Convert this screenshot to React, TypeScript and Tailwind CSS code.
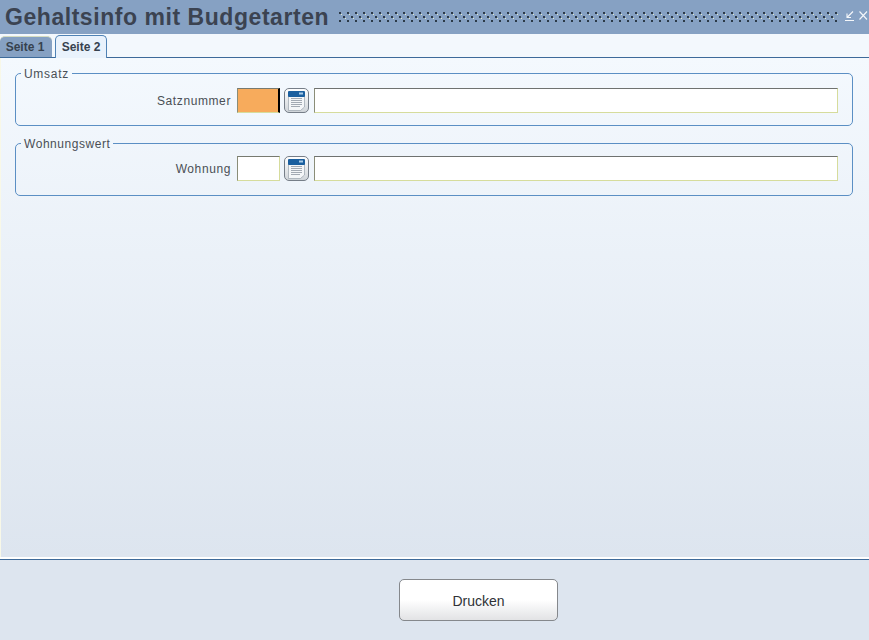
import React from "react";

function CalendarIcon() {
  return (
    <svg width="25" height="25" viewBox="0 0 25 25" className="block">
      <defs>
        <linearGradient id="calBg" x1="0" y1="0" x2="0" y2="1">
          <stop offset="0" stopColor="#ffffff" />
          <stop offset="1" stopColor="#cfd4d9" />
        </linearGradient>
      </defs>
      <rect x="0.5" y="0.5" width="24" height="24" rx="4.5" fill="url(#calBg)" stroke="#767e88" />
      <path d="M4.5 6h16v13l-4 3.5h-12z" fill="#f4f6f8" stroke="#9aa3ac" strokeWidth="0.7" />
      <rect x="4" y="3" width="17" height="6" rx="1" fill="#1a5f9f" />
      <rect x="15" y="4.5" width="4" height="2" fill="#a8cbe8" />
      <path d="M7 10.5h11M7 12.5h11M7 14.5h11M7 16.5h11M7 18.5h9" stroke="#9aa2aa" strokeWidth="0.9" />
    </svg>
  );
}

function Field({ label, width, orange }: { label: string; width: string; orange?: boolean }) {
  return (
    <div className="flex items-center h-[25px]">
      <div className={`${width} text-right text-[12px] text-[#4a4f55] tracking-[0.6px] pr-[6px] shrink-0`}>{label}</div>
      <div
        className={`w-[43px] h-[25px] shrink-0 border border-[#d6dc9c] border-t-[#777a70] border-l-[#8a8d78] ${
          orange ? "bg-[#f7ab5c] border-r-[2px] border-r-black" : "bg-white"
        }`}
      />
      <div className="ml-[4px] shrink-0">
        <CalendarIcon />
      </div>
      <div className="ml-[5px] w-[524px] h-[25px] bg-white border border-[#d6dc9c] border-t-[#6f7270] border-l-[#8a8d78] shrink-0" />
    </div>
  );
}

function Group({ title, label, orange, inset, spacing }: { title: string; label: string; orange?: boolean; inset: string; spacing: string }) {
  return (
    <fieldset className={`border border-[#5b8fc4] rounded-[5px] ml-[14px] mr-[16px] h-[60px] ${inset}`}>
      <legend className={`ml-[5px] px-[3px] text-[12px] leading-[14px] text-[#4a4f55] pt-[1px] ${spacing}`}>{title}</legend>
      <Field label={label} width="w-[221px]" orange={orange} />
    </fieldset>
  );
}

export default function App() {
  return (
    <div className="w-[869px] h-[640px] overflow-hidden bg-[#dde5ef] font-['Liberation_Sans',Arial,sans-serif]">
      <div className="h-[34px] bg-[#86a1c3] flex items-center pl-[5px] pt-[1px]">
        <div className="text-[23px] font-bold text-[#3b4351] tracking-[0.55px] leading-none whitespace-nowrap">
          Gehaltsinfo mit Budgetarten
        </div>
        <svg width="500" height="11" className="absolute left-[338px] top-[11px]">
          <defs>
            <pattern id="dots" width="8" height="8" patternUnits="userSpaceOnUse">
              <rect x="1" y="1" width="2" height="2" fill="#2c3a48" />
              <rect x="3" y="3" width="1" height="1" fill="#e4ebc9" />
              <rect x="5" y="5" width="2" height="2" fill="#2c3a48" />
              <rect x="7" y="7" width="1" height="1" fill="#e4ebc9" />
            </pattern>
          </defs>
          <rect width="500" height="11" fill="url(#dots)" />
        </svg>
        <svg width="24" height="12" viewBox="0 0 24 12" className="absolute left-[844px] top-[10px]">
          <path d="M9 1.5 3.5 7M3 3.5V7.5H7M1 10.5H10" stroke="#f4f7fa" strokeWidth="1.1" fill="none" />
          <path d="M15.5 1.5 23 9.5M23 1.5 15.5 9.5" stroke="#f4f7fa" strokeWidth="1.1" fill="none" />
        </svg>
      </div>

      <div className="h-[24px] bg-[#f3f8fd] flex items-end border-b border-[#3d6a9a]">
        <div className="w-[52px] h-[21px] bg-[#86a1c3] rounded-t-[5px] flex items-center justify-center text-[12px] font-bold text-[#36414f] border-t border-[#d5dcc0] pr-[2px]">
          Seite 1
        </div>
        <div className="ml-[3px] w-[52px] h-[23px] -mb-[1px] bg-[#e9f2fc] rounded-t-[5px] border border-b-0 border-[#4f82b5] flex items-center justify-center text-[12px] font-bold text-[#36414f]">
          Seite 2
        </div>
      </div>

      <div className="h-[499px] bg-gradient-to-b from-[#f4f9fe] to-[#dde5ef] pt-[8px] flex flex-col gap-[10px] border-l border-[#f8f8e8]">
        <Group title="Umsatz" label="Satznummer" orange inset="pt-[7px]" spacing="tracking-[0.7px]" />
        <Group title="Wohnungswert" label="Wohnung" inset="pt-[5px]" spacing="tracking-[0.55px]" />
      </div>

      <div className="h-[2px] bg-white" />
      <div className="h-[1px] bg-[#3d6a9a]" />

      <div className="flex justify-center pt-[19px] pl-[88px]">
        <button className="w-[159px] h-[42px] pt-[2px] rounded-[5px] border border-[#85888c] bg-gradient-to-b from-white from-50% to-[#e2e3e5] text-[14px] text-[#2f3236]">
          Drucken
        </button>
      </div>
    </div>
  );
}
